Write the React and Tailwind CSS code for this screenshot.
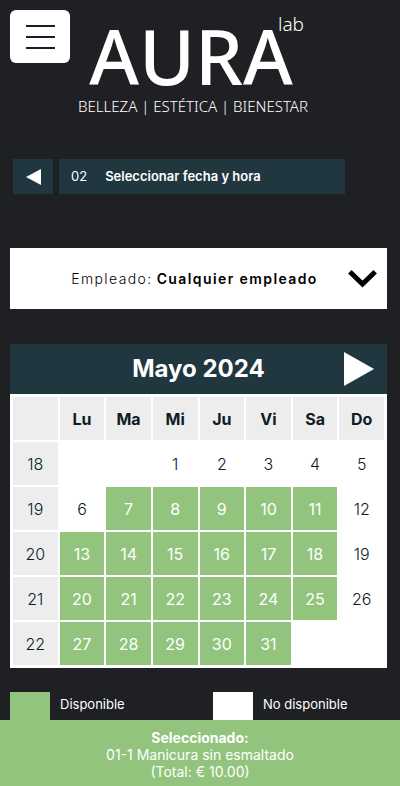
import React, { useState } from 'react'

const weekDays = ["Lu", "Ma", "Mi", "Ju", "Vi", "Sa", "Do"];

const weeks = [
  { number: 18, days: [null, null, 1, 2, 3, 4, 5] },
  { number: 19, days: [6, 7, 8, 9, 10, 11, 12] },
  { number: 20, days: [13, 14, 15, 16, 17, 18, 19] },
  { number: 21, days: [20, 21, 22, 23, 24, 25, 26] },
  { number: 22, days: [27, 28, 29, 30, 31, null, null] },
];

const closedDays = [12, 19, 26];
const isAvailable = (day) => day >= 7 && !closedDays.includes(day);

const Header = () => (
  <header className="flex items-start gap-2 pt-2.5 pl-2.5">
    <button type="button" aria-label="Menú" className="flex h-[53px] w-[60px] shrink-0 flex-col items-center justify-center gap-[9px] rounded-md bg-white">
      <span className="h-0.5 w-[29px] bg-[#1b1e2a]" />
      <span className="h-0.5 w-[29px] bg-[#1b1e2a]" />
      <span className="h-0.5 w-[29px] bg-[#1b1e2a]" />
    </button>
    <a href="#inicio" className="flex w-[230px] flex-col font-['Noto_Sans',sans-serif] text-white">
      <span className="pt-1.5 pr-1 text-right text-[19px] leading-4 font-light">lab</span>
      <span className="pr-1 text-center text-[76px] leading-[48px] font-medium">AURA</span>
      <span className="pt-4 text-center text-[15px] leading-5 font-light whitespace-nowrap">BELLEZA | ESTÉTICA | BIENESTAR</span>
    </a>
  </header>
)

const StepBar = () => (
  <nav className="mt-[43px] mr-[55px] ml-[13px] flex h-[35px] gap-1.5 text-white">
    <button type="button" aria-label="Volver" className="flex w-10 shrink-0 items-center justify-center bg-[#213740]">
      <svg width="15" height="16" viewBox="0 0 15 16" fill="currentColor"><path d="M0 8 15 0v16z" /></svg>
    </button>
    <div className="flex flex-1 items-center gap-[18px] bg-[#213740] px-3 text-[13px]">
      <span>02</span>
      <h1 className="font-semibold">Seleccionar fecha y hora</h1>
    </div>
  </nav>
)

const EmployeeSelect = () => (
  <div className="relative mt-[54px] flex h-[61px] items-center justify-center gap-1 bg-white pr-2 text-[14px] tracking-widest text-black">
    <label htmlFor="employee" className="font-light">Empleado:</label>
    <select id="employee" className="field-sizing-content appearance-none bg-transparent font-semibold tracking-widest">
      <option>Cualquier empleado</option>
    </select>
    <svg className="pointer-events-none absolute right-2.5" width="29" height="18" viewBox="0 0 29 18" fill="none" stroke="currentColor" strokeWidth="5">
      <path d="M1.8 1.8 14.5 14 27.2 1.8" />
    </svg>
  </div>
)

const Calendar = () => {
  const [selected, setSelected] = useState(null);

  return (
    <section className="mt-[35px] text-[#0f1c26]">
      <div className="flex h-[50px] items-center bg-[#213740] pr-[13px] text-white">
        <h2 className="flex-1 pl-[43px] text-center text-[24px] font-bold">Mayo 2024</h2>
        <button type="button" aria-label="Mes siguiente">
          <svg width="30" height="34" viewBox="0 0 30 34" fill="currentColor"><path d="M0 0 30 17 0 34z" /></svg>
        </button>
      </div>
      <table className="w-full table-fixed border-separate border-spacing-[2px] border border-white bg-white text-center text-[16px] font-light">
        <thead>
          <tr className="h-[43px]">
            <td className="bg-[#ededed]" />
            {weekDays.map((name) => (
              <th key={name} scope="col" className="bg-[#ededed] p-0 font-bold">{name}</th>
            ))}
          </tr>
        </thead>
        <tbody>
          {weeks.map((week) => (
            <tr key={week.number} className="h-[43px]">
              <th scope="row" className="bg-[#ededed] p-0 font-light">{week.number}</th>
              {week.days.map((day, index) => (
                <td key={index} className="p-0">
                  {isAvailable(day) ? (
                    <button
                      type="button"
                      onClick={() => setSelected(day)}
                      className={`block h-[43px] w-full font-normal text-white ${selected === day ? "bg-[#213740]" : "bg-[#92c47d]"}`}
                    >
                      {day}
                    </button>
                  ) : day}
                </td>
              ))}
            </tr>
          ))}
        </tbody>
      </table>
    </section>
  )
}

const Legend = () => (
  <ul className="mt-6 grid grid-cols-[203fr_174fr] text-[13px] leading-6 text-white">
    <li className="flex gap-2.5">
      <span className="size-10 shrink-0 bg-[#92c47d]" />
      Disponible
    </li>
    <li className="flex gap-2.5">
      <span className="size-10 shrink-0 bg-white" />
      No disponible
    </li>
  </ul>
)

const App = () => {
  return (
    <div className="min-h-screen bg-[#1f2024] font-['Inter',sans-serif]">
      <Header />
      <StepBar />
      <main className="pr-[13px] pl-2.5">
        <EmployeeSelect />
        <Calendar />
        <Legend />
      </main>
      <footer className="fixed inset-x-0 bottom-0 h-[66px] bg-[#92c47d] pt-[9px] text-center text-[14px] leading-[17px] text-white">
        <p className="font-bold">Seleccionado:</p>
        <p>01-1 Manicura sin esmaltado</p>
        <p>(Total: € 10.00)</p>
      </footer>
    </div>
  )
}

export default App
